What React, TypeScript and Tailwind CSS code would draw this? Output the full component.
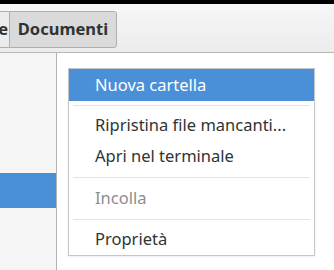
import React from "react";

const font = { fontFamily: '"Noto Sans", "Open Sans", sans-serif' };

const MenuItem = ({
  label,
  active,
  disabled,
}: {
  label: string;
  active?: boolean;
  disabled?: boolean;
}) => (
  <div
    className={`flex items-center pl-[26px] text-[16.5px] ${
      active
        ? "h-[32px] bg-[#4a90d9] text-white"
        : disabled
          ? "h-[31px] text-[#8b8e8f]"
          : "h-[31px] text-[#2e3436]"
    }`}
  >
    {label}
  </div>
);

const Separator = ({ top, bottom }: { top: string; bottom: string }) => (
  <div className={`${top} ${bottom} mx-[4px] h-px bg-[#e3e3e3]`} />
);

export default function App() {
  return (
    <div
      className="flex h-[270px] w-[334px] flex-col overflow-hidden bg-white"
      style={font}
    >
      <div className="h-[4px] bg-black" />
      <div className="flex h-[49px] items-start border-b border-[#b6b6b3] bg-gradient-to-b from-[#f7f7f7] to-[#ececec] pt-[7px]">
        <div className="flex h-[37px] w-[9px] justify-end overflow-hidden border-y border-[#aeaeae] bg-[#ececec]">
          <span className="flex items-center whitespace-nowrap pr-[1px] text-[16.5px] font-bold text-[#2e3436]">
            Home
          </span>
        </div>
        <div className="flex h-[37px] w-[108px] items-center justify-center rounded-r-[3px] border border-[#aeaeae] bg-[#dadada] text-[16.5px] font-bold text-[#2e3436]">
          Documenti
        </div>
      </div>
      <div className="flex flex-1">
        <div className="w-[57px] border-r border-[#b2b2b2] bg-[#f5f5f5] pt-[120px]">
          <div className="h-[35px] bg-[#4a90d9]" />
        </div>
        <div className="flex-1 bg-white pl-[11px] pt-[15px]">
          <div className="w-[247px] border border-[#c6c6c6] bg-white shadow-[0_1px_2px_rgba(0,0,0,0.08)]">
            <MenuItem label="Nuova cartella" active />
            <Separator top="mt-[4px]" bottom="mb-[4px]" />
            <MenuItem label="Ripristina file mancanti..." />
            <MenuItem label="Apri nel terminale" />
            <Separator top="mt-[5px]" bottom="mb-[5px]" />
            <MenuItem label="Incolla" disabled />
            <Separator top="mt-[5px]" bottom="mb-[4px]" />
            <MenuItem label="Proprietà" />
          </div>
        </div>
      </div>
    </div>
  );
}
